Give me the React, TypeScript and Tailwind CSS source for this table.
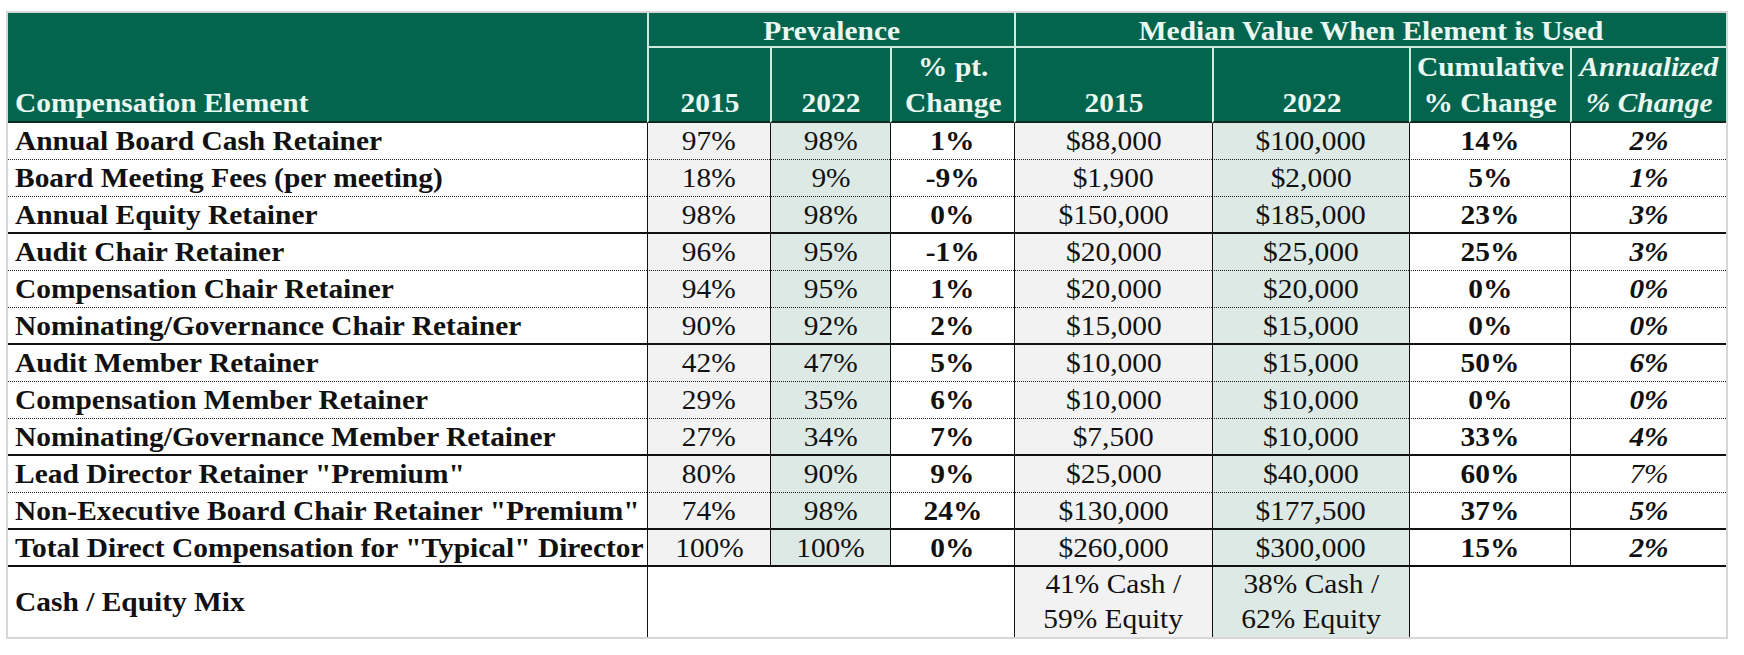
import React from "react";

type Row = {
  label: string;
  p15: string;
  p22: string;
  ch: string;
  m15: string;
  m22: string;
  cum: string;
  ann: string;
  annLight?: boolean;
  groupEnd?: boolean;
};

const rows: Row[] = [
  { label: "Annual Board Cash Retainer", p15: "97%", p22: "98%", ch: "1%", m15: "$88,000", m22: "$100,000", cum: "14%", ann: "2%" },
  { label: "Board Meeting Fees (per meeting)", p15: "18%", p22: "9%", ch: "-9%", m15: "$1,900", m22: "$2,000", cum: "5%", ann: "1%" },
  { label: "Annual Equity Retainer", p15: "98%", p22: "98%", ch: "0%", m15: "$150,000", m22: "$185,000", cum: "23%", ann: "3%", groupEnd: true },
  { label: "Audit Chair Retainer", p15: "96%", p22: "95%", ch: "-1%", m15: "$20,000", m22: "$25,000", cum: "25%", ann: "3%" },
  { label: "Compensation Chair Retainer", p15: "94%", p22: "95%", ch: "1%", m15: "$20,000", m22: "$20,000", cum: "0%", ann: "0%" },
  { label: "Nominating/Governance Chair Retainer", p15: "90%", p22: "92%", ch: "2%", m15: "$15,000", m22: "$15,000", cum: "0%", ann: "0%", groupEnd: true },
  { label: "Audit Member Retainer", p15: "42%", p22: "47%", ch: "5%", m15: "$10,000", m22: "$15,000", cum: "50%", ann: "6%" },
  { label: "Compensation Member Retainer", p15: "29%", p22: "35%", ch: "6%", m15: "$10,000", m22: "$10,000", cum: "0%", ann: "0%" },
  { label: "Nominating/Governance Member Retainer", p15: "27%", p22: "34%", ch: "7%", m15: "$7,500", m22: "$10,000", cum: "33%", ann: "4%", groupEnd: true },
  { label: 'Lead Director Retainer "Premium"', p15: "80%", p22: "90%", ch: "9%", m15: "$25,000", m22: "$40,000", cum: "60%", ann: "7%", annLight: true },
  { label: 'Non-Executive Board Chair Retainer "Premium"', p15: "74%", p22: "98%", ch: "24%", m15: "$130,000", m22: "$177,500", cum: "37%", ann: "5%", groupEnd: true },
  { label: 'Total Direct Compensation for "Typical" Director', p15: "100%", p22: "100%", ch: "0%", m15: "$260,000", m22: "$300,000", cum: "15%", ann: "2%", groupEnd: true },
];

const GRAY = "bg-[#f2f2f2]";
const MINT = "bg-[#dde9e4]";

// the source text is set a little wider than the font's natural width
function T({ children, left = false }: { children: React.ReactNode; left?: boolean }) {
  return (
    <span
      className={`inline-block whitespace-nowrap scale-x-[1.09] ${left ? "origin-left" : "origin-center"}`}
    >
      {children}
    </span>
  );
}

export default function App() {
  return (
    <div className="min-h-screen bg-white font-[family-name:'Liberation_Serif','Times_New_Roman',serif] text-[27px] text-[#111]">
      <div className="ml-[6px] mt-[11px] w-[1722px] border-2 border-[#d7d7d7]">
        <div className="grid grid-cols-[639px_123px_120px_124px_198px_197px_161px_156px] grid-rows-[35px_75px_repeat(12,37px)_70px] overflow-hidden">
          {/* header */}
          <div className="row-span-2 flex items-end bg-[#04654f] pl-[7px] font-bold leading-[36px] text-[#eaf8f1] [border-bottom:2px_solid_#0d2a20]">
            <T left>Compensation Element</T>
          </div>
          <div className="col-span-3 flex items-center justify-center bg-[#04654f] pt-[3px] font-bold leading-[32px] text-[#eaf8f1] [border-left:2px_solid_#cfe9de] [border-bottom:2px_solid_#cfe9de]">
            <T>Prevalence</T>
          </div>
          <div className="col-span-4 flex items-center justify-center bg-[#04654f] pt-[3px] font-bold leading-[32px] text-[#eaf8f1] [border-left:2px_solid_#cfe9de] [border-bottom:2px_solid_#cfe9de]">
            <T>Median Value When Element is Used</T>
          </div>
          {[
            ["2015"],
            ["2022"],
            ["% pt.", "Change"],
            ["2015"],
            ["2022"],
            ["Cumulative", "% Change"],
          ].map((lines, i) => (
            <div
              key={i}
              className="flex flex-col items-center justify-end bg-[#04654f] text-center font-bold leading-[36px] text-[#eaf8f1] [border-left:2px_solid_#cfe9de] [border-bottom:2px_solid_#0d2a20]"
            >
              {lines.map((l) => (
                <T key={l}>{l}</T>
              ))}
            </div>
          ))}
          <div className="flex flex-col items-center justify-end bg-[#04654f] text-center font-bold italic leading-[36px] text-[#eaf8f1] [border-left:2px_solid_#cfe9de] [border-bottom:2px_solid_#0d2a20]">
            <T>Annualized</T>
            <T>% Change</T>
          </div>

          {/* body */}
          {rows.map((r) => {
            const bottom = r.groupEnd
              ? "[border-bottom:2px_solid_#111]"
              : "[border-bottom:1px_dotted_#222]";
            const cell = `flex items-center justify-center leading-[36px] [border-left:1px_solid_#111] ${bottom}`;
            return (
              <React.Fragment key={r.label}>
                <div className={`flex items-center pl-[7px] font-bold leading-[36px] ${bottom}`}>
                  <T left>{r.label}</T>
                </div>
                <div className={`${cell} ${GRAY}`}><T>{r.p15}</T></div>
                <div className={`${cell} ${MINT}`}><T>{r.p22}</T></div>
                <div className={`${cell} bg-white font-bold`}><T>{r.ch}</T></div>
                <div className={`${cell} ${GRAY}`}><T>{r.m15}</T></div>
                <div className={`${cell} ${MINT}`}><T>{r.m22}</T></div>
                <div className={`${cell} bg-white font-bold`}><T>{r.cum}</T></div>
                <div className={`${cell} bg-white italic ${r.annLight ? "font-normal" : "font-bold"}`}>
                  <T>{r.ann}</T>
                </div>
              </React.Fragment>
            );
          })}

          {/* cash / equity mix */}
          <div className="flex items-center pl-[7px] font-bold leading-[36px]">
            <T left>Cash / Equity Mix</T>
          </div>
          <div className="col-span-3 bg-white [border-left:1px_solid_#111]" />
          <div className={`flex flex-col items-center overflow-hidden leading-[35px] ${GRAY} [border-left:1px_solid_#111]`}>
            <T>41% Cash /</T>
            <T>59% Equity</T>
          </div>
          <div className={`flex flex-col items-center overflow-hidden leading-[35px] ${MINT} [border-left:1px_solid_#111]`}>
            <T>38% Cash /</T>
            <T>62% Equity</T>
          </div>
          <div className="col-span-2 bg-white [border-left:1px_solid_#111]" />
        </div>
      </div>
    </div>
  );
}
